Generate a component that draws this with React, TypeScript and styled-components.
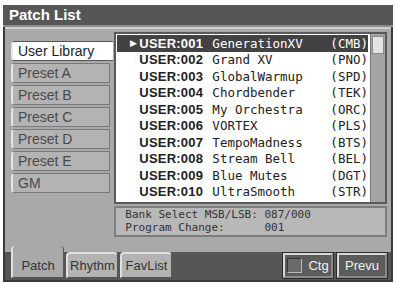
import React from 'react';
import styled, { createGlobalStyle } from 'styled-components';

const GlobalStyle = createGlobalStyle`
  html, body {
    margin: 0;
    padding: 0;
    background: #ffffff;
  }
`;

const Window = styled.div`
  width: 386px;
  height: 275px;
  margin: 5px 0 0 3px;
  border: 2px solid #3a3a3a;
  border-top: 0;
  background: #a9a9a9;
  display: flex;
  flex-direction: column;
  font-family: "Liberation Sans", Arial, sans-serif;
`;

const TitleBar = styled.div`
  height: 20px;
  background: #565656;
  color: #fff;
  font-weight: bold;
  font-size: 15px;
  line-height: 20px;
  padding-left: 6px;
  border-bottom: 2px solid #8c8c8c;
  margin: 0 -2px;
`;

const Main = styled.div`
  display: flex;
  padding: 3px 4px 0 6px;
  flex: 1;
  border-top: 2px solid #cfcfcf;
`;

const SideTabs = styled.div`
  width: 106px;
  padding-top: 9px;
  display: flex;
  flex-direction: column;
  gap: 2px;
`;

const SideTab = styled.div<{ $active?: boolean }>`
  height: 18px;
  line-height: 18px;
  font-size: 14px;
  padding-left: 5px;
  color: ${p => (p.$active ? '#222' : '#4a4a4a')};
  background: ${p => (p.$active ? '#ffffff' : '#b3b3b3')};
  border: 1px solid ${p => (p.$active ? '#555' : '#7a7a7a')};
  border-left: 2px solid #e6e6e6;
  border-right: ${p => (p.$active ? '0' : '1px solid #7a7a7a')};
  border-radius: 4px 0 0 4px;
  margin-right: ${p => (p.$active ? '-2px' : '1px')};
`;

const RightCol = styled.div`
  flex: 1;
  display: flex;
  flex-direction: column;
  gap: 2px;
  padding-left: 3px;
`;

const ListPanel = styled.div`
  height: 166px;
  background: #ffffff;
  border: 2px solid #5a5a5a;
  display: flex;
  padding: 1px;
`;

const Rows = styled.div`
  flex: 1;
  display: flex;
  flex-direction: column;
`;

const Row = styled.div<{ $sel?: boolean }>`
  height: 16.5px;
  display: flex;
  align-items: center;
  background: ${p => (p.$sel ? '#424242' : 'transparent')};
  color: ${p => (p.$sel ? '#ffffff' : '#222')};
`;

const Mark = styled.span`
  width: 20px;
  font-size: 9px;
  text-align: right;
  padding-right: 2px;
`;

const Num = styled.span`
  width: 73px;
  font-weight: bold;
  font-size: 13px;
  letter-spacing: 0.2px;
`;

const Name = styled.span`
  width: 118px;
  font-family: "DejaVu Sans Mono", "Liberation Mono", monospace;
  font-size: 12.5px;
`;

const Cat = styled.span`
  font-family: "DejaVu Sans Mono", "Liberation Mono", monospace;
  font-size: 12.5px;
`;

const ScrollTrack = styled.div`
  width: 12px;
  background: #a4a4a4;
  border-left: 1px solid #777;
  margin: -1px -1px -1px 2px;
  padding: 2px 1px;
`;

const ScrollThumb = styled.div`
  height: 16px;
  background: #e4e4e4;
  border: 1px solid #8a8a8a;
`;

const InfoBox = styled.div`
  height: 26px;
  background: #b8b8b8;
  border: 2px solid #7d7d7d;
  padding: 1px 9px 0;
  font-family: "DejaVu Sans Mono", "Liberation Mono", monospace;
  font-size: 11px;
  line-height: 12.5px;
  color: #333;
  white-space: pre;
`;

const BottomBar = styled.div`
  height: 32px;
  display: flex;
  align-items: flex-end;
  background: linear-gradient(#a9a9a9 0 6px, #565656 6px);
  padding: 0 4px 2px 6px;
`;

const BottomTab = styled.div<{ $active?: boolean; $w: number }>`
  height: ${p => (p.$active ? '32px' : '26px')};
  width: ${p => p.$w}px;
  box-sizing: border-box;
  background: ${p => (p.$active ? '#a9a9a9' : '#b3b3b3')};
  border: 1px solid #555;
  border-left: 2px solid #e0e0e0;
  border-top: ${p => (p.$active ? '0' : '2px solid #e0e0e0')};
  border-radius: 4px 4px 0 0;
  font-size: 13px;
  color: #333;
  display: flex;
  align-items: flex-end;
  justify-content: center;
  padding-bottom: 4px;
  margin-right: 2px;
`;

const Spacer = styled.div`
  flex: 1;
`;

const Btn = styled.div<{ $w: number }>`
  width: ${p => p.$w}px;
  height: 25px;
  box-sizing: border-box;
  background: #5c5c5c;
  border: 2px solid #8a8a8a;
  border-top-color: #d8d8d8;
  border-left-color: #d8d8d8;
  outline: 1px solid #2a2a2a;
  color: #f0f0f0;
  font-size: 13px;
  display: flex;
  align-items: center;
  justify-content: center;
  gap: 6px;
  margin-left: 4px;
`;

const Check = styled.span`
  width: 13px;
  height: 13px;
  background: #6a6a6a;
  border: 1px solid #bbb;
  border-top-color: #333;
  border-left-color: #333;
`;

const patches = [
  ['USER:001', 'GenerationXV', '(CMB)'],
  ['USER:002', 'Grand XV', '(PNO)'],
  ['USER:003', 'GlobalWarmup', '(SPD)'],
  ['USER:004', 'Chordbender', '(TEK)'],
  ['USER:005', 'My Orchestra', '(ORC)'],
  ['USER:006', 'VORTEX', '(PLS)'],
  ['USER:007', 'TempoMadness', '(BTS)'],
  ['USER:008', 'Stream Bell', '(BEL)'],
  ['USER:009', 'Blue Mutes', '(DGT)'],
  ['USER:010', 'UltraSmooth', '(STR)'],
];

const groups = ['User Library', 'Preset A', 'Preset B', 'Preset C', 'Preset D', 'Preset E', 'GM'];

const App = () => {
  return (
    <>
      <GlobalStyle />
      <Window>
        <TitleBar>Patch List</TitleBar>
        <Main>
          <SideTabs>
            {groups.map((g, i) => (
              <SideTab key={g} $active={i === 0}>{g}</SideTab>
            ))}
          </SideTabs>
          <RightCol>
            <ListPanel>
              <Rows>
                {patches.map((p, i) => (
                  <Row key={p[0]} $sel={i === 0}>
                    <Mark>{i === 0 ? '▶' : ''}</Mark>
                    <Num>{p[0]}</Num>
                    <Name>{p[1]}</Name>
                    <Cat>{p[2]}</Cat>
                  </Row>
                ))}
              </Rows>
              <ScrollTrack>
                <ScrollThumb />
              </ScrollTrack>
            </ListPanel>
            <InfoBox>{'Bank Select MSB/LSB: 087/000\nProgram Change:      001'}</InfoBox>
          </RightCol>
        </Main>
        <BottomBar>
          <BottomTab $active $w={53}>Patch</BottomTab>
          <BottomTab $w={52}>Rhythm</BottomTab>
          <BottomTab $w={52}>FavList</BottomTab>
          <Spacer />
          <Btn $w={50}><Check />Ctg</Btn>
          <Btn $w={50}>Prevu</Btn>
        </BottomBar>
      </Window>
    </>
  );
};

export default App;
